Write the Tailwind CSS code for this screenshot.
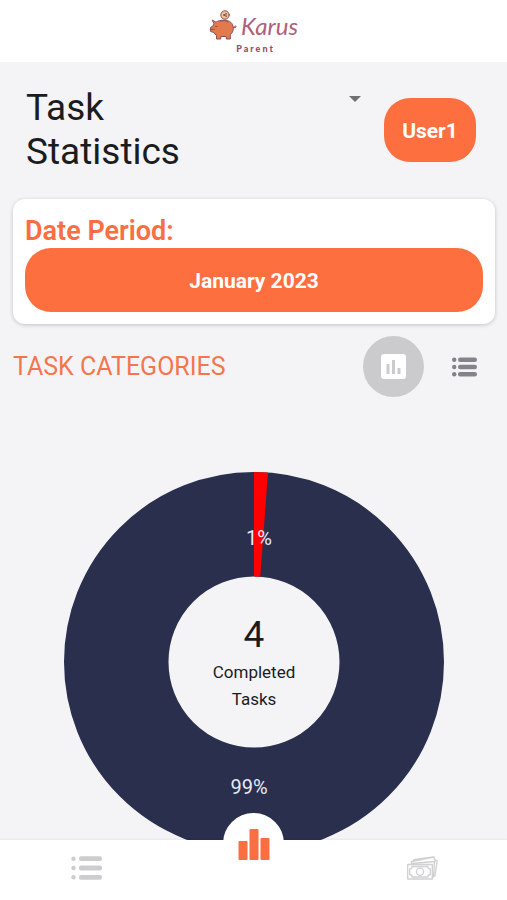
<!DOCTYPE html>
<html lang="en">
<head>
<meta charset="utf-8">
<meta name="viewport" content="width=device-width, initial-scale=1">
<title>Karus Parent - Task Statistics</title>
<script src="https://cdn.jsdelivr.net/npm/@tailwindcss/browser@4"></script>
</head>
<body class="flex h-screen flex-col overflow-hidden bg-[#f4f4f7] font-['Roboto',sans-serif] text-[#1c1c1e]">
  <header class="flex shrink-0 flex-col items-center bg-white pt-2 pb-2">
    <div class="flex h-9 items-center gap-1">
      <svg class="h-9 w-7" viewBox="0 0 28 36" fill="none" stroke="#8d4f66" stroke-width="1" stroke-linejoin="round" stroke-linecap="round" aria-hidden="true">
        <circle cx="16" cy="7" r="4.200" fill="#edc489"/>
        <path d="M17.500 5.500L14.500 7L17.500 8.500M14.500 7h3"/>
        <path fill="#e37a4d" d="M3.500 12.200l3.500 2c2-1.500 4.500-2 8-2 5.500 0 9.300 3 9.300 7.800 0 3-1.200 5.300-3 6.700V31h-4v-2.500h-5.500V31H7.500v-3.800c-1.200-.6-2-1.500-2.600-2.600L1.500 23.400v-4l2.500-1.400c.2-.8.400-1.300.8-1.900z"/>
        <path d="M11.500 13.200c2.500-.8 5.500-.6 7.500.6M24.500 19.500c1.500.8 3-.3 2.300-1.400-.6-.8-1.700 0-1 1.400M6.500 18.500h1.500M2.500 21.300h3"/>
      </svg>
      <span class="font-['Lato',cursive] text-2xl leading-8 text-[#b0607a] italic">Karus</span>
    </div>
    <span class="pl-1 font-['Lato',sans-serif] text-[9px] leading-[10px] font-black tracking-[2px] text-[#a04a62]">Parent</span>
  </header>

  <main class="min-h-0 flex-1 overflow-hidden pr-3 pl-[13px]">
    <section class="flex items-start pt-6 pr-[19px] pl-[13px]">
      <h1 class="w-44 text-[37px] leading-[44px]">Task Statistics</h1>
      <div class="relative mt-1 ml-auto h-6 w-28">
        <select class="h-6 w-full appearance-none bg-transparent text-xs" aria-label="Choose user"></select>
        <svg class="pointer-events-none absolute top-[6px] right-0 h-[6px] w-3" viewBox="0 0 12 6" fill="#707072" aria-hidden="true"><path d="M0 0h12L6 6z"/></svg>
      </div>
      <button class="mt-3 ml-[23px] h-16 w-[92px] rounded-[26px] bg-[#fe6f40] pt-1 text-[21px] font-bold text-white">User1</button>
    </section>

    <section class="mt-[25px] rounded-xl bg-white px-3 pt-4 pb-3 shadow-[0_1px_4px_rgba(0,0,0,0.2)]">
      <h2 class="text-[27px] leading-8 font-semibold text-[#fb6e42]">Date Period:</h2>
      <button class="mt-px h-16 w-full rounded-[26px] bg-[#fe6f40] pt-1 text-[21px] font-bold text-white">January 2023</button>
    </section>

    <section class="mt-3 flex items-center pr-[18px]">
      <h2 class="text-[25px] leading-8 text-[#f5764e]">TASK CATEGORIES</h2>
      <button class="ml-auto flex size-[61px] items-center justify-center rounded-full bg-[#cbcbce]" aria-label="Chart view">
        <svg class="size-[25px]" viewBox="0 0 25 25" aria-hidden="true"><rect width="25" height="25" rx="3" fill="#fff"/><g fill="#cbcbce"><rect x="5.500" y="10" width="3" height="10"/><rect x="11" y="6" width="3" height="14"/><rect x="16.500" y="14" width="3" height="6"/></g></svg>
      </button>
      <button class="ml-7 flex h-10 w-[25px] items-center" aria-label="List view">
        <svg class="h-5 w-[25px]" viewBox="0 0 25 20" fill="#838489" aria-hidden="true"><circle cx="2.200" cy="2.700" r="2.200"/><circle cx="2.200" cy="10" r="2.200"/><circle cx="2.200" cy="17.300" r="2.200"/><rect x="6" y=".5" width="19" height="4.400" rx="2.200"/><rect x="6" y="7.800" width="19" height="4.400" rx="2.200"/><rect x="6" y="15.100" width="19" height="4.400" rx="2.200"/></svg>
      </button>
    </section>

    <section class="mt-[75px] flex justify-center">
      <div class="relative size-[380px]">
        <svg class="size-full" viewBox="0 0 380 380" role="img" aria-label="Completed tasks by category">
          <circle cx="190" cy="190" r="137.750" fill="none" stroke="#292f4c" stroke-width="104.500"/>
          <path fill="#f00" d="M190 0A190 190 0 0 1 204 .5L196.300 104.730A85.500 85.500 0 0 0 190 104.500z"/>
          <g fill="#e8e9f2" font-family="Roboto, sans-serif" font-size="20" text-anchor="middle">
            <text x="195" y="73">1%</text>
            <text x="185" y="322">99%</text>
          </g>
        </svg>
        <div class="absolute inset-0 flex flex-col items-center justify-center">
          <p class="text-[37px] leading-[48px]">4</p>
          <p class="w-24 text-center text-[17px] leading-[27px]">Completed Tasks</p>
        </div>
      </div>
    </section>
  </main>

  <nav class="relative grid h-[60px] shrink-0 grid-cols-3 bg-white shadow-[0_-1px_2px_rgba(0,0,0,0.05)]">
    <a href="#tasks" class="flex items-center justify-center pb-1 pl-1" aria-label="Tasks">
      <svg class="h-6 w-[31px]" viewBox="0 0 31 24" fill="#cdcdcf" aria-hidden="true"><circle cx="2.500" cy="2.700" r="2.200"/><circle cx="2.500" cy="12" r="2.200"/><circle cx="2.500" cy="21.300" r="2.200"/><rect x="8" y=".3" width="23" height="4.800" rx="2"/><rect x="8" y="9.600" width="23" height="4.800" rx="2"/><rect x="8" y="18.900" width="23" height="4.800" rx="2"/></svg>
    </a>
    <a href="#statistics" class="-mt-[27px] flex size-[61px] items-center justify-center justify-self-center rounded-full bg-white" aria-label="Statistics">
      <svg class="size-8" viewBox="0 0 32 32" fill="#fb6e42" aria-hidden="true"><rect x=".5" y="13" width="9" height="19" rx="1"/><rect x="11.500" y="1" width="9" height="31" rx="1"/><rect x="22.500" y="10" width="9" height="22" rx="1"/></svg>
    </a>
    <a href="#money" class="flex items-center justify-center pb-1" aria-label="Money">
      <svg class="h-6 w-[31px]" viewBox="0 0 31 24" fill="none" stroke="#d0d0d3" stroke-width="1.300" stroke-linejoin="round" aria-hidden="true"><path d="M4.500 8V5.500L27 1l1 5M7 4.500l-.3-.8L26.500 .8M27.500 3.500l2.700 1.200L28 20h-2M5 7.500L27.500 5.500 26.500 21.500"/><rect x=".7" y="8.500" width="24.600" height="14.500"/><path d="M5 10.500h16c0 1.500 1 2.500 2.300 2.500v5.500c-1.300 0-2.300 1-2.300 2.500H5c0-1.500-1-2.500-2.300-2.500V13C4 13 5 12 5 10.500z"/><circle cx="13" cy="15.700" r="3.600"/></svg>
    </a>
  </nav>
</body>
</html>
